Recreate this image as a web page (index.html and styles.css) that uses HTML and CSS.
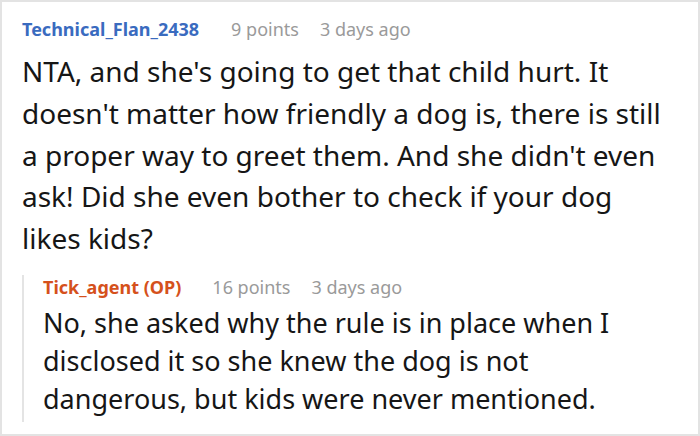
FILE: index.html
```html
<!DOCTYPE html>
<html>
<head>
<meta charset="utf-8">
<link rel="stylesheet" href="styles.css">
</head>
<body>
<div class="frame">
  <div class="comment">
    <div class="meta">
      <span class="user">Technical_Flan_2438</span>
      <span class="pts">9 points</span>
      <span class="ago">3 days ago</span>
    </div>
    <p class="text">NTA, and she's going to get that child hurt. It doesn't matter how friendly a dog is, there is still a proper way to greet them. And she didn't even ask! Did she even bother to check if your dog likes kids?</p>
    <div class="reply">
      <div class="meta rmeta">
        <span class="user op">Tick_agent (OP)</span>
        <span class="pts rpts">16 points</span>
        <span class="ago">3 days ago</span>
      </div>
      <p class="text rtext">No, she asked why the rule is in place when I disclosed it so she knew the dog is not dangerous, but kids were never mentioned.</p>
    </div>
  </div>
</div>
</body>
</html>
```
FILE: styles.css
```css
html, body { margin: 0; padding: 0; background: #fff; }
body { font-family: "Noto Sans", sans-serif; }
.frame {
  width: 700px; height: 436px; box-sizing: border-box;
  border: 2px solid #e3e3e3; overflow: hidden;
}
.comment { padding: 15px 22px 0 20px; }
.meta { display: flex; align-items: baseline; font-size: 18px; line-height: 24px; white-space: nowrap; }
.user { font-weight: bold; color: #3a6bbf; margin-right: 32px; }
.op { color: #d5511c; margin-right: 31px; }
.pts { color: #9a9a9a; margin-right: 21px; }
.rpts { margin-right: 21px; }
.ago { color: #9a9a9a; }
.text { margin: 10px 0 0 0; font-size: 28px; line-height: 41.75px; color: #161616; }
.reply { margin-top: 24px; margin-left: 0; border-left: 2px solid #e4e4e4; padding-left: 19px; }
.rmeta { margin-top: -9px; }
.rtext {
  margin-top: 5.5px; margin-bottom: 0; padding-bottom: 4px;
  font-size: 27px; line-height: 38px; width: 630px;
}
```
